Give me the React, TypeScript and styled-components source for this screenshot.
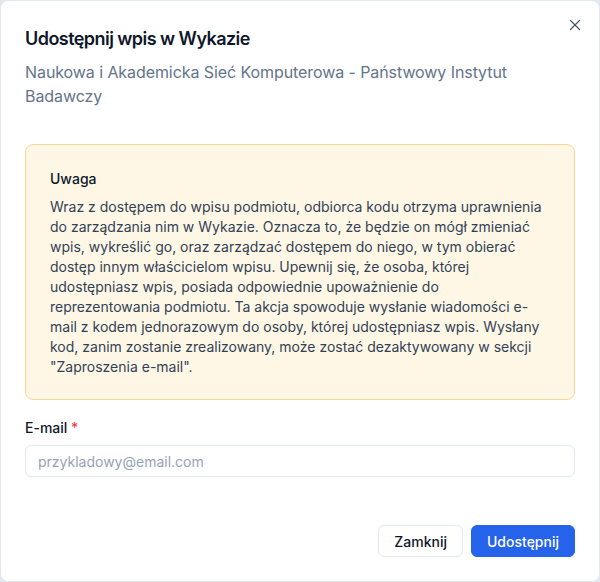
import React from 'react';
import styled, { createGlobalStyle } from 'styled-components';
import { X } from 'lucide-react';

const GlobalStyle = createGlobalStyle`
  html, body {
    margin: 0;
    padding: 0;
    background: #e2e8f0;
  }
  body {
    font-family: Inter, "Noto Sans", sans-serif;
    -webkit-font-smoothing: antialiased;
  }
  * {
    box-sizing: border-box;
  }
`;

const Dialog = styled.div`
  position: relative;
  width: 600px;
  height: 582px;
  background: #ffffff;
  border: 1px solid #e2e8f0;
  border-radius: 8px;
  padding: 24px;
  display: flex;
  flex-direction: column;
`;

const CloseButton = styled.button`
  position: absolute;
  top: 15px;
  right: 15px;
  width: 18px;
  height: 18px;
  padding: 0;
  border: none;
  background: transparent;
  color: #475569;
  display: flex;
  align-items: center;
  justify-content: center;
  cursor: pointer;
`;

const Header = styled.div`
  display: flex;
  flex-direction: column;
  gap: 7px;
  margin-bottom: 36px;
`;

const Title = styled.h2`
  margin: 0;
  font-size: 18px;
  line-height: 28px;
  font-weight: 600;
  color: #0f172a;
  letter-spacing: -0.55px;
`;

const Subtitle = styled.p`
  margin: 0;
  font-size: 16px;
  line-height: 24px;
  color: #64748b;
  letter-spacing: -0.08px;
`;

const Alert = styled.div`
  background: #fef7e6;
  border: 1px solid #fcd694;
  border-radius: 8px;
  padding: 24px 24px 22px;
`;

const AlertTitle = styled.div`
  font-size: 14px;
  line-height: 20px;
  font-weight: 500;
  color: #0f172a;
  margin-bottom: 8px;
`;

const AlertText = styled.p`
  margin: 0;
  font-size: 14px;
  line-height: 20px;
  color: #334155;
`;

const Field = styled.div`
  display: flex;
  flex-direction: column;
  gap: 7px;
  margin-top: 18px;
`;

const Label = styled.label`
  font-size: 14px;
  line-height: 20px;
  font-weight: 500;
  color: #0f172a;
`;

const Required = styled.span`
  color: #ef4444;
`;

const Input = styled.input`
  height: 32px;
  width: 100%;
  border: 1px solid #e2e8f0;
  border-radius: 6px;
  padding: 0 12px;
  font-family: inherit;
  font-size: 14px;
  color: #0f172a;
  background: #ffffff;
  outline: none;

  &::placeholder {
    color: #94a3b8;
  }
`;

const Footer = styled.div`
  margin-top: auto;
  display: flex;
  justify-content: flex-end;
  gap: 8px;
`;

const Button = styled.button<{ $primary?: boolean }>`
  height: 32px;
  padding: 0 15px;
  border-radius: 6px;
  font-family: inherit;
  font-size: 14px;
  font-weight: 500;
  cursor: pointer;
  border: 1px solid ${({ $primary }) => ($primary ? '#2563eb' : '#e2e8f0')};
  background: ${({ $primary }) => ($primary ? '#2563eb' : '#ffffff')};
  color: ${({ $primary }) => ($primary ? '#ffffff' : '#0f172a')};
`;

export default function App() {
  return (
    <>
      <GlobalStyle />
      <Dialog>
        <CloseButton aria-label="Zamknij">
          <X size={18} strokeWidth={1.6} />
        </CloseButton>
        <Header>
          <Title>Udostępnij wpis w Wykazie</Title>
          <Subtitle>Naukowa i Akademicka Sieć Komputerowa - Państwowy Instytut Badawczy</Subtitle>
        </Header>
        <Alert>
          <AlertTitle>Uwaga</AlertTitle>
          <AlertText>
            Wraz z dostępem do wpisu podmiotu, odbiorca kodu otrzyma uprawnienia do zarządzania nim w
            Wykazie. Oznacza to, że będzie on mógł zmieniać wpis, wykreślić go, oraz zarządzać dostępem
            do niego, w tym obierać dostęp innym właścicielom wpisu. Upewnij się, że osoba, której
            udostępniasz wpis, posiada odpowiednie upoważnienie do reprezentowania podmiotu. Ta akcja
            spowoduje wysłanie wiadomości e-mail z kodem jednorazowym do osoby, której udostępniasz
            wpis. Wysłany kod, zanim zostanie zrealizowany, może zostać dezaktywowany w sekcji
            "Zaproszenia e-mail".
          </AlertText>
        </Alert>
        <Field>
          <Label htmlFor="email">
            E-mail <Required>*</Required>
          </Label>
          <Input id="email" type="email" placeholder="przykladowy@email.com" />
        </Field>
        <Footer>
          <Button>Zamknij</Button>
          <Button $primary>Udostępnij</Button>
        </Footer>
      </Dialog>
    </>
  );
}
